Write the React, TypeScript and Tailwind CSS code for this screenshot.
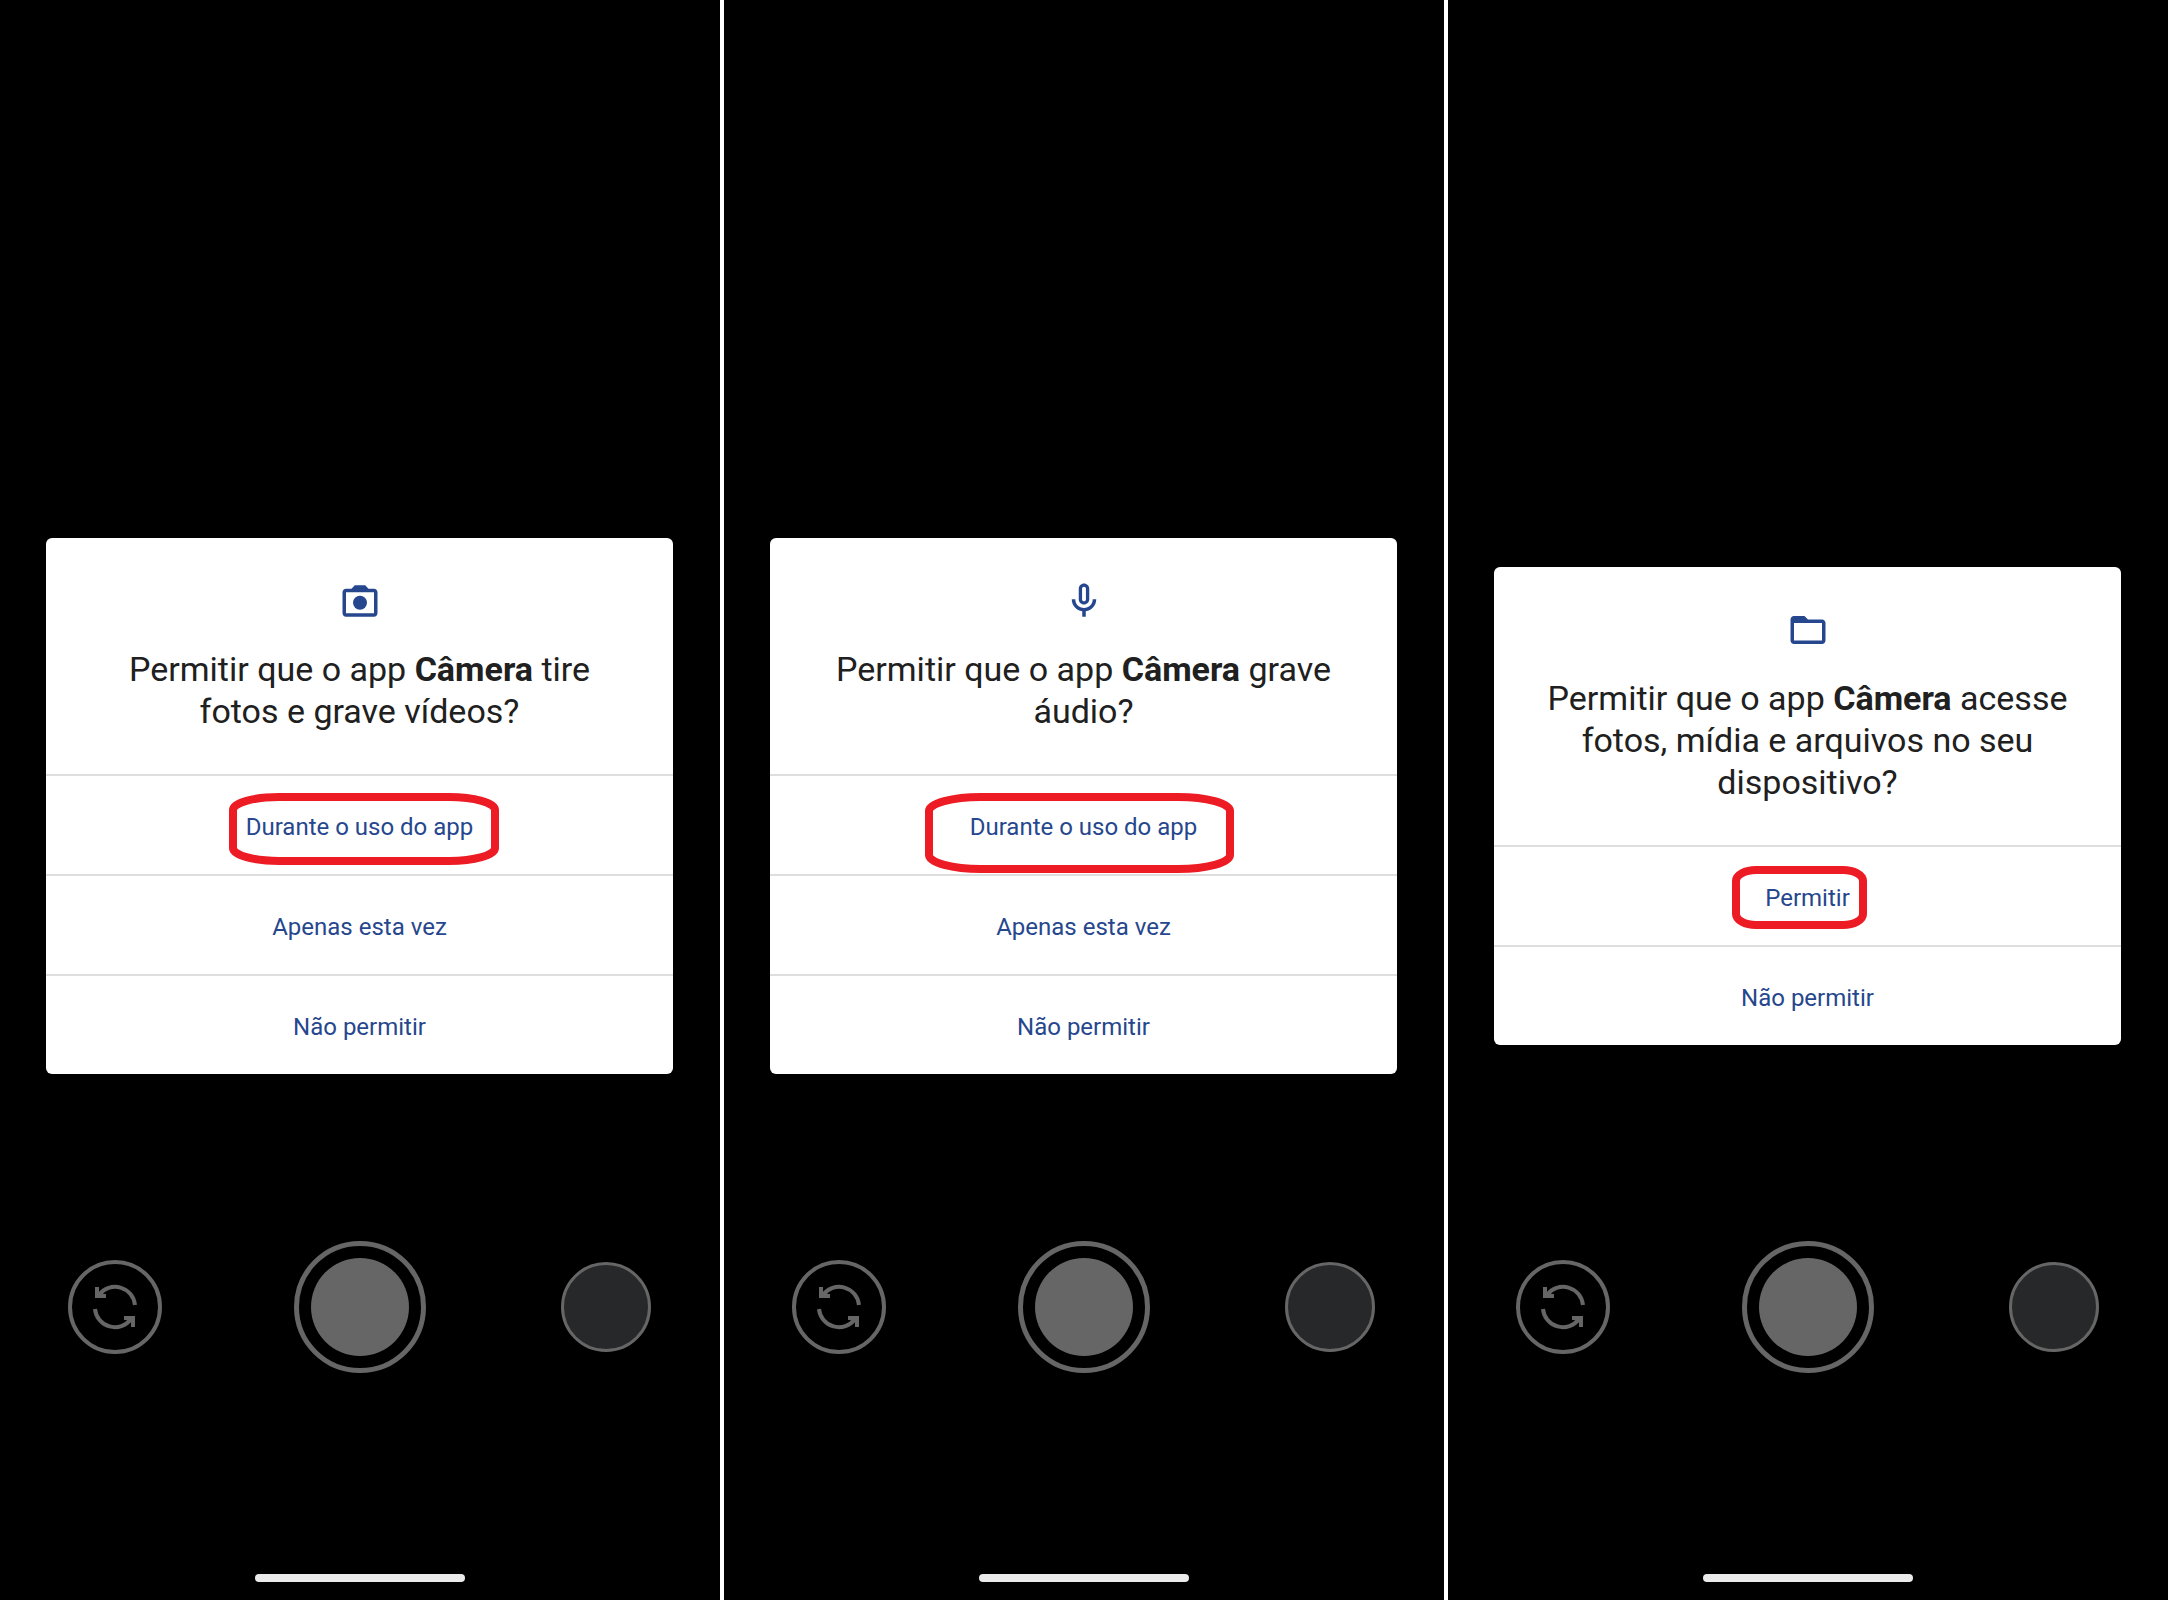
import { useState } from "react";
import { MdFolderOpen } from "react-icons/md";

interface Highlight {
  width: number;
  height: number;
  rx: number;
  ry: number;
  position: string;
}

interface Permission {
  id: string;
  icon: React.ReactNode;
  before: string;
  after: string;
  options: string[];
  highlight: Highlight;
}

const CameraIcon = () => (
  <svg viewBox="0 0 24 24" className="size-[42px]" fill="currentColor" aria-hidden="true">
    <path
      fillRule="evenodd"
      d="M20 5h-3.17L15 3H9L7.17 5H4c-1.1 0-2 .9-2 2v12c0 1.1.9 2 2 2h16c1.1 0 2-.9 2-2V7c0-1.1-.9-2-2-2zm0 14H4V7h16v12z"
    />
    <circle cx="12" cy="13" r="4" />
  </svg>
);

const MicIcon = () => (
  <svg viewBox="0 0 24 24" className="size-[42px]" fill="currentColor" aria-hidden="true">
    <path
      fillRule="evenodd"
      d="M12 14c1.66 0 3-1.34 3-3V5c0-1.66-1.34-3-3-3S9 3.34 9 5v6c0 1.66 1.34 3 3 3zm-1.1-9.1c0-.61.49-1.1 1.1-1.1s1.1.49 1.1 1.1v6.2c0 .61-.49 1.1-1.1 1.1s-1.1-.49-1.1-1.1V4.9z"
    />
    <path d="M17 11c0 2.76-2.24 5-5 5s-5-2.24-5-5H5c0 3.53 2.61 6.43 6 6.92V21h2v-3.08c3.39-.49 6-3.39 6-6.92h-2z" />
  </svg>
);

const SwitchIcon = () => (
  <svg viewBox="-24 -24 48 48" className="size-12" fill="none" stroke="currentColor" strokeWidth="4" aria-hidden="true">
    <path d="M20 -2A20 20 0 0 0 -16 -12" />
    <path d="M-18 -20V-11H-9" />
    <path d="M-20 2A20 20 0 0 0 16 12" />
    <path d="M18 20V11H9" />
  </svg>
);

const permissions: Permission[] = [
  {
    id: "camera",
    icon: <CameraIcon />,
    before: "Permitir que o app",
    after: "tire fotos e grave vídeos?",
    options: ["Durante o uso do app", "Apenas esta vez", "Não permitir"],
    highlight: { width: 270, height: 72, rx: 46, ry: 13, position: "translate-x-1 translate-y-1" },
  },
  {
    id: "mic",
    icon: <MicIcon />,
    before: "Permitir que o app",
    after: "grave áudio?",
    options: ["Durante o uso do app", "Apenas esta vez", "Não permitir"],
    highlight: { width: 309, height: 80, rx: 52, ry: 14, position: "-translate-x-1 translate-y-2" },
  },
  {
    id: "files",
    icon: <MdFolderOpen className="size-[42px]" aria-hidden="true" />,
    before: "Permitir que o app",
    after: "acesse fotos, mídia e arquivos no seu dispositivo?",
    options: ["Permitir", "Não permitir"],
    highlight: { width: 135, height: 63, rx: 20, ry: 11, position: "-translate-x-2 translate-y-px" },
  },
];

const HighlightRing = ({ width, height, rx, ry, position }: Highlight) => (
  <span className="pointer-events-none absolute inset-0 flex items-center justify-center">
    <svg width={width} height={height} className={`shrink-0 ${position}`} fill="none" aria-hidden="true">
      <rect x="4" y="4" width={width - 8} height={height - 8} rx={rx} ry={ry} stroke="#ed1c24" strokeWidth="8" />
    </svg>
  </span>
);

const PermissionDialog = ({ permission }: { permission: Permission }) => {
  const [selected, setSelected] = useState("");

  return (
    <div
      role="dialog"
      aria-labelledby={`${permission.id}-title`}
      className="z-10 col-start-1 row-start-1 mt-3 mr-[47px] ml-[46px] self-center overflow-hidden rounded-md bg-white"
    >
      <div className="flex flex-col items-center px-12 py-[42px] text-[#26478d]">
        {permission.icon}
        <h2 id={`${permission.id}-title`} className="mt-[26px] text-center text-[34px] leading-[42px] text-[#202020]">
          {permission.before} <strong className="font-bold">Câmera</strong> {permission.after}
        </h2>
      </div>
      {permission.options.map((option, index) => (
        <button
          key={option}
          type="button"
          aria-pressed={selected === option}
          onClick={() => setSelected(option)}
          className="relative flex h-[100px] w-full cursor-pointer items-center justify-center border-t-2 border-[#dedede] pt-1 text-2xl text-[#26478d]"
        >
          {option}
          {index === 0 && <HighlightRing {...permission.highlight} />}
        </button>
      ))}
    </div>
  );
};

const CameraScreen = ({ permission }: { permission: Permission }) => (
  <section className="grid bg-black">
    <PermissionDialog permission={permission} />
    <div className="col-start-1 row-start-1 flex flex-col items-center self-end pb-[18px]">
      <div className="flex w-full items-center justify-between pr-[66px] pl-[68px] text-[#666]">
        <button
          type="button"
          aria-label="Alternar câmera"
          className="flex size-[94px] items-center justify-center rounded-full border-4 border-[#666]"
        >
          <SwitchIcon />
        </button>
        <button
          type="button"
          aria-label="Tirar foto"
          className="flex size-[132px] items-center justify-center rounded-full border-[5px] border-[#666]"
        >
          <span className="size-[98px] rounded-full bg-[#666]" />
        </button>
        <div className="flex w-24 justify-center">
          <button
            type="button"
            aria-label="Galeria"
            className="size-[90px] rounded-full border-[3px] border-[#666] bg-[#262829]"
          />
        </div>
      </div>
      <div className="mt-[201px] h-2 w-[210px] rounded-full bg-[#ebebeb]" />
    </div>
  </section>
);

const App = () => {
  return (
    <main className="grid min-h-screen grid-cols-3 gap-1 bg-white font-['Roboto',sans-serif]">
      {permissions.map((permission) => (
        <CameraScreen key={permission.id} permission={permission} />
      ))}
    </main>
  );
};

export default App;
